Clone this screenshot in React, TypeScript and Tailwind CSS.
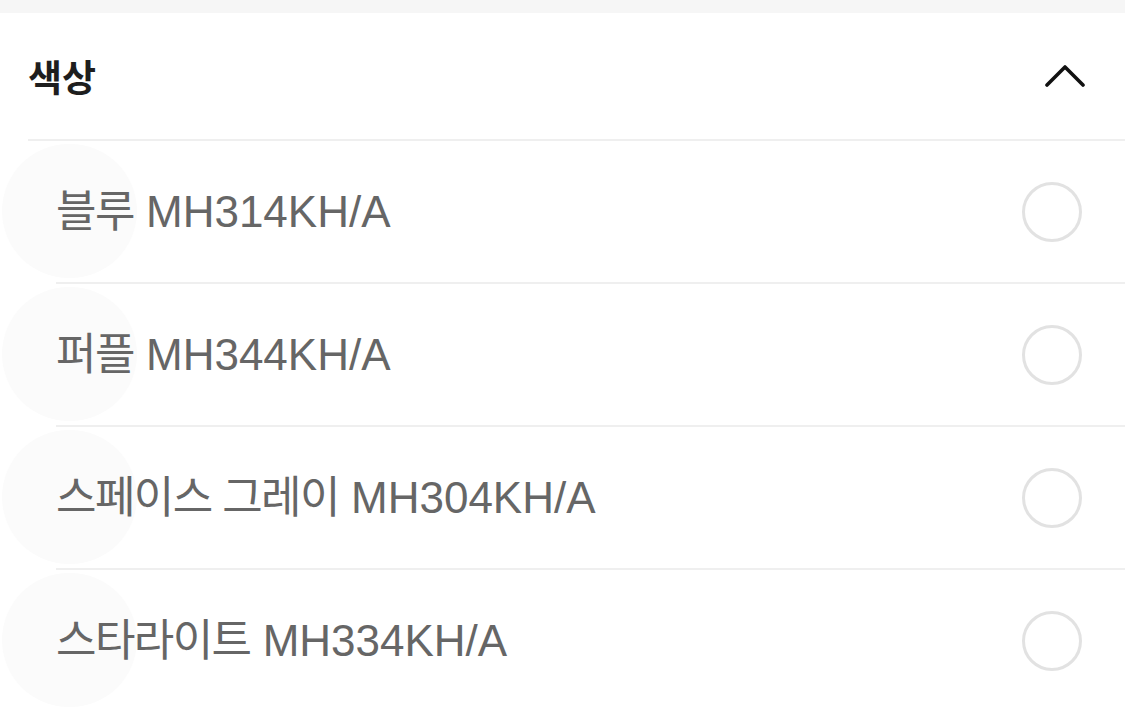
const options = [
  { id: "blue", label: "블루", code: "MH314KH/A" },
  { id: "purple", label: "퍼플", code: "MH344KH/A" },
  { id: "gray", label: "스페이스 그레이", code: "MH304KH/A" },
  { id: "starlight", label: "스타라이트", code: "MH334KH/A" },
];

function ChevronUp() {
  return (
    <svg width="40" height="24" viewBox="0 0 40 24" fill="none">
      <path d="M2 21 L20 3 L38 21" stroke="#111" strokeWidth="3.6" strokeLinecap="round" strokeLinejoin="round" />
    </svg>
  );
}

export default function App() {
  return (
    <div
      className="h-[709px] w-full overflow-hidden bg-white"
      style={{ fontFamily: '"Liberation Sans", "Noto Sans CJK KR", sans-serif' }}
    >
      <div className="h-[13px] bg-[#f6f6f6]" />
      <div className="pl-[28px]">
        <div className="flex h-[128px] items-center justify-between border-b-2 border-[#efefef] pr-[40px]">
          <span
            className="text-[37px] font-bold leading-none text-[#1e1e1e]"
            style={{ fontFamily: '"Noto Sans CJK KR", sans-serif' }}
          >
            색상
          </span>
          <ChevronUp />
        </div>
        <ul className="pl-[28px]">
          {options.map((o) => (
            <li
              key={o.id}
              className="relative flex h-[143px] items-center justify-between border-b-2 border-[#efefef] pr-[43px]"
            >
              <span className="absolute left-[-54px] top-[3px] h-[134px] w-[135px] rounded-full bg-[#fbfbfb]" />
              <span className="relative text-[44px] text-[#666666]">
                <span className="tracking-[-1.6px]">{o.label}</span> {o.code}
              </span>
              <span className="relative h-[60px] w-[60px] rounded-full border-[3px] border-[#e2e2e2]" />
            </li>
          ))}
        </ul>
      </div>
    </div>
  );
}
